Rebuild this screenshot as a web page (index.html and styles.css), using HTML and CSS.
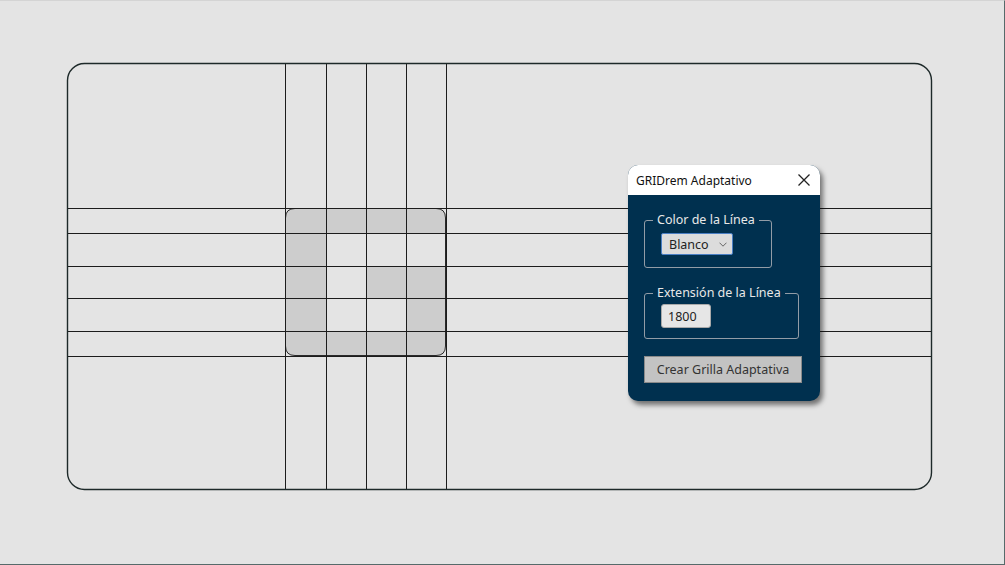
FILE: index.html
```html
<!DOCTYPE html>
<html lang="es">
<head>
  <meta charset="UTF-8">
  <meta name="viewport" content="width=device-width, initial-scale=1.0">
  <title>GRIDrem Adaptativo</title>

  <!-- Styles -->
  <link rel="stylesheet" href="styles.css">
</head>
<body>
  <main class="stage">
    <!-- Grid drawing -->
    <svg class="board" width="1005" height="565" viewBox="0 0 1005 565">
      <path class="cell-fill" d="M295 208 H436 Q446 208 446 218 V346 Q446 356 436 356 H295 Q285 356 285 346 V218 Q285 208 295 208 Z"/>
      <rect class="cell-clear" x="326" y="233" width="120" height="33"/>
      <rect class="cell-clear" x="326" y="266" width="40" height="32"/>
      <rect class="cell-clear" x="326" y="298" width="80" height="33"/>
      <path class="cell-edge" d="M295 208.5 H436 Q445.5 208.5 445.5 218 V346 Q445.5 355.5 436 355.5 H295 Q285.5 355.5 285.5 346 V218 Q285.5 208.5 295 208.5 Z"/>

      <g class="lines">
        <line x1="285.5" y1="63" x2="285.5" y2="489"/>
        <line x1="326.5" y1="63" x2="326.5" y2="489"/>
        <line x1="366.5" y1="63" x2="366.5" y2="489"/>
        <line x1="406.5" y1="63" x2="406.5" y2="489"/>
        <line x1="446.5" y1="63" x2="446.5" y2="489"/>
        <line x1="67" y1="208.5" x2="931" y2="208.5"/>
        <line x1="67" y1="233.5" x2="931" y2="233.5"/>
        <line x1="67" y1="266.5" x2="931" y2="266.5"/>
        <line x1="67" y1="298.5" x2="931" y2="298.5"/>
        <line x1="67" y1="331.5" x2="931" y2="331.5"/>
        <line x1="67" y1="356.5" x2="931" y2="356.5"/>
      </g>

      <rect class="frame" x="67.5" y="63.5" width="864" height="426" rx="17" ry="17"/>
    </svg>

    <!-- Dialog -->
    <section class="dialog">
      <header class="dialog-title">
        <span>GRIDrem Adaptativo</span>
        <button class="close" type="button" aria-label="Cerrar">
          <svg width="12" height="12" viewBox="0 0 12 12">
            <path d="M0.5 0.5 L11.5 11.5 M11.5 0.5 L0.5 11.5"/>
          </svg>
        </button>
      </header>

      <div class="dialog-body">
        <fieldset class="group group-color">
          <legend>Color de la Línea</legend>
          <div class="select">
            <span>Blanco</span>
            <svg width="8" height="5" viewBox="0 0 8 5"><path d="M0.5 0.7 L4 4.2 L7.5 0.7"/></svg>
          </div>
        </fieldset>

        <fieldset class="group group-ext">
          <legend>Extensión de la Línea</legend>
          <input class="num" type="text" value="1800">
        </fieldset>

        <button class="create" type="button">Crear Grilla Adaptativa</button>
      </div>
    </section>
  </main>
</body>
</html>
```

FILE: styles.css
```css
* {
  box-sizing: border-box;
  margin: 0;
  padding: 0;
}

body {
  width: 1005px;
  height: 565px;
  overflow: hidden;
  background: #e4e4e4;
  border-top: 1px solid #d4d4d4;
  border-right: 1px solid #566a6a;
  border-bottom: 1px solid #566a6a;
  font-family: 'Noto Sans', 'Open Sans', sans-serif;
}

.stage {
  position: relative;
  width: 100%;
  height: 100%;
}

.board {
  display: block;
  position: absolute;
  left: 0;
  top: -1px;
}

/* Grid drawing */
.cell-fill {
  fill: #cdcdcd;
}

.cell-clear {
  fill: #e4e4e4;
}

.cell-edge {
  fill: none;
  stroke: #2a2a2a;
  stroke-width: 1;
}

.lines line {
  stroke: #1c1c1c;
  stroke-width: 1;
}

.frame {
  fill: none;
  stroke: #1d2929;
  stroke-width: 1.4;
}

/* Dialog */
.dialog {
  position: absolute;
  left: 628px;
  top: 164px;
  width: 192px;
  height: 236px;
  border-radius: 10px;
  overflow: hidden;
  background: #00304f;
  box-shadow: 3px 4px 5px rgba(0, 0, 0, 0.5);
}

.dialog-title {
  display: flex;
  align-items: center;
  justify-content: space-between;
  height: 30px;
  padding: 0 10px 0 8px;
  background: #ffffff;
  color: #111;
  font-size: 12px;
}

.close {
  display: flex;
  border: none;
  background: none;
  cursor: pointer;
}

.close path {
  stroke: #222;
  stroke-width: 1.3;
  fill: none;
}

.dialog-body {
  padding: 16px 16px 18px;
}

.group {
  border: 1px solid #929ca6;
  border-radius: 3px;
  padding: 4px 0 12px 16px;
}

.group legend {
  margin-left: -8px;
  padding: 0 4px;
  color: #e8e8e8;
  font-size: 12.5px;
  line-height: 18px;
}

.group-color {
  width: 128px;
}

.group-ext {
  width: 155px;
  margin-top: 16px;
  padding-top: 2px;
  padding-bottom: 10px;
}

.select {
  display: flex;
  align-items: center;
  justify-content: space-between;
  width: 72px;
  height: 22px;
  padding: 0 5px 0 7px;
  background: #dcdcdc;
  border: 1px solid #4a7fc4;
  border-radius: 2px;
  color: #222;
  font-size: 12.5px;
}

.select path {
  fill: none;
  stroke: #666;
  stroke-width: 1;
}

.num {
  display: block;
  width: 50px;
  height: 24px;
  padding: 0 6px;
  background: #e6e6e6;
  border: 1px solid #a9a9a9;
  border-radius: 3px;
  color: #222;
  font-family: inherit;
  font-size: 12.5px;
}

.create {
  display: block;
  width: 158px;
  height: 27px;
  margin-top: 17px;
  background: #c3c3c3;
  border: 1px solid #8a8a8a;
  color: #333;
  font-family: inherit;
  font-size: 12.5px;
  cursor: pointer;
}
```
